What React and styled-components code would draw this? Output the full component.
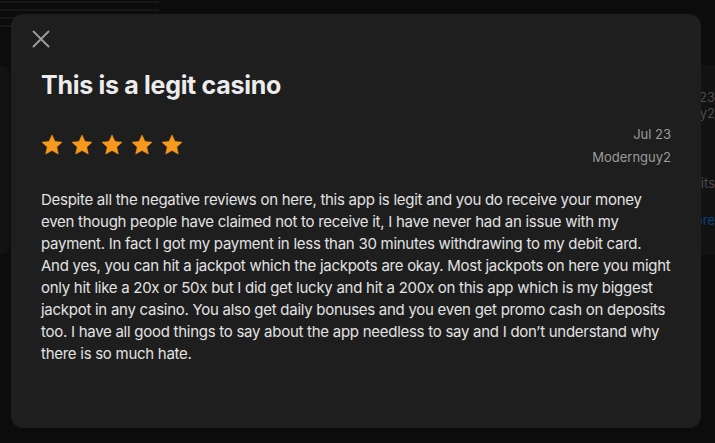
import React from 'react';
import styled, { createGlobalStyle } from 'styled-components';

const GlobalStyle = createGlobalStyle`
    html, body {
        margin: 0;
        padding: 0;
        background: #0c0c0c;
    }
    body {
        font-family: Inter, 'Noto Sans', sans-serif;
        -webkit-font-smoothing: antialiased;
    }
`;

const Page = styled.div`
    width: 715px;
    height: 443px;
    position: relative;
    overflow: hidden;
    background: #0c0c0c;
`;

const Stripes = styled.div`
    width: 159px;
    display: flex;
    flex-direction: column;
    gap: 6px;
    padding-top: 1px;
`;

const Stripe = styled.div`
    height: 2px;
    background: #181818;
`;

const CardRow = styled.div`
    display: flex;
    gap: 30px;
    margin: 38px 0 0 -380px;
`;

const BackCard = styled.div`
    flex: 0 0 ${(p) => p.width}px;
    height: 190px;
    background: #121212;
    border-radius: 10px;
    padding: 20px 20px 0;
    box-sizing: border-box;
    display: flex;
    flex-direction: column;
    color: #4c4c4c;
    font-size: 13px;
    line-height: 18px;
`;

const BackMeta = styled.div`
    align-self: flex-end;
    text-align: right;
    line-height: 16px;
    margin-top: 4px;
`;

const BackText = styled.p`
    margin: ${(p) => p.top}px 0 0;
    text-align: right;
`;

const BackLink = styled.span`
    color: #0b3f7e;
`;

const Modal = styled.div`
    position: absolute;
    left: 11px;
    top: 14px;
    width: 690px;
    height: 414px;
    box-sizing: border-box;
    background: #1e1e1e;
    border-radius: 12px;
    padding: 16px 30px;
    display: flex;
    flex-direction: column;
`;

const CloseButton = styled.button`
    width: 18px;
    height: 18px;
    margin-left: -9px;
    padding: 0;
    border: none;
    background: transparent;
    display: flex;
    cursor: pointer;
`;

const Title = styled.h1`
    margin: 22px 0 0;
    font-size: 25px;
    line-height: 30px;
    font-weight: 700;
    color: #ececec;
    letter-spacing: -0.3px;
`;

const RatingRow = styled.div`
    margin-top: 22px;
    display: flex;
    align-items: center;
    justify-content: space-between;
`;

const Stars = styled.div`
    display: flex;
    gap: 8px;
`;

const Meta = styled.div`
    display: flex;
    flex-direction: column;
    align-items: flex-end;
    gap: 3px;
    padding-top: 2px;
    color: #9b9b9b;
    font-size: 13px;
    line-height: 20px;
`;

const Body = styled.p`
    margin: 22px -14px 0 0;
    color: #e2e2e2;
    font-size: 15px;
    line-height: 22px;
    letter-spacing: -0.27px;
`;

const reviewLines = [
    'Despite all the negative reviews on here, this app is legit and you do receive your money',
    'even though people have claimed not to receive it, I have never had an issue with my',
    'payment. In fact I got my payment in less than 30 minutes withdrawing to my debit card.',
    'And yes, you can hit a jackpot which the jackpots are okay. Most jackpots on here you might',
    'only hit like a 20x or 50x but I did get lucky and hit a 200x on this app which is my biggest',
    'jackpot in any casino. You also get daily bonuses and you even get promo cash on deposits',
    'too. I have all good things to say about the app needless to say and I don’t understand why',
    'there is so much hate.',
];

const Star = () => (
    <svg width="22" height="22" viewBox="0 0 24 24">
        <path
            d="M12 1l3.3 7.1 7.7.8-5.8 5.3 1.7 7.7L12 18l-6.9 3.9 1.7-7.7L1 8.9l7.7-.8z"
            fill="#f8981d"
            stroke="#f8981d"
            strokeWidth="0.6"
            strokeLinejoin="round"
        />
    </svg>
);

const App = () => (
    <Page>
        <GlobalStyle />
        <Stripes>
            <Stripe />
            <Stripe />
            <Stripe />
            <Stripe />
        </Stripes>
        <CardRow>
            <BackCard width={390}>
                <BackText top={54}>
                    Excellent customer service ter<br />
                    and i get paid on time and i l m<br />
                    the games are fun to play for<br />
                    five stars from me, highly rated
                </BackText>
            </BackCard>
            <BackCard width={695}>
                <BackMeta>
                    Jul 23<br />
                    Modernguy2
                </BackMeta>
                <BackText top={53}>cash on deposits</BackText>
                <BackText top={19}>
                    <BackLink>more</BackLink>
                </BackText>
            </BackCard>
        </CardRow>

        <Modal>
            <CloseButton aria-label="Close">
                <svg width="18" height="18" viewBox="0 0 18 18">
                    <path
                        d="M1.5 1.5l15 15M16.5 1.5l-15 15"
                        stroke="#9d9d9d"
                        strokeWidth="1.9"
                        strokeLinecap="round"
                    />
                </svg>
            </CloseButton>
            <Title>This is a legit casino</Title>
            <RatingRow>
                <Stars>
                    <Star />
                    <Star />
                    <Star />
                    <Star />
                    <Star />
                </Stars>
                <Meta>
                    <span>Jul 23</span>
                    <span>Modernguy2</span>
                </Meta>
            </RatingRow>
            <Body>
                {reviewLines.map((line, i) => (
                    <React.Fragment key={i}>
                        {line}
                        {i < reviewLines.length - 1 && <br />}
                    </React.Fragment>
                ))}
            </Body>
        </Modal>
    </Page>
);

export default App;
